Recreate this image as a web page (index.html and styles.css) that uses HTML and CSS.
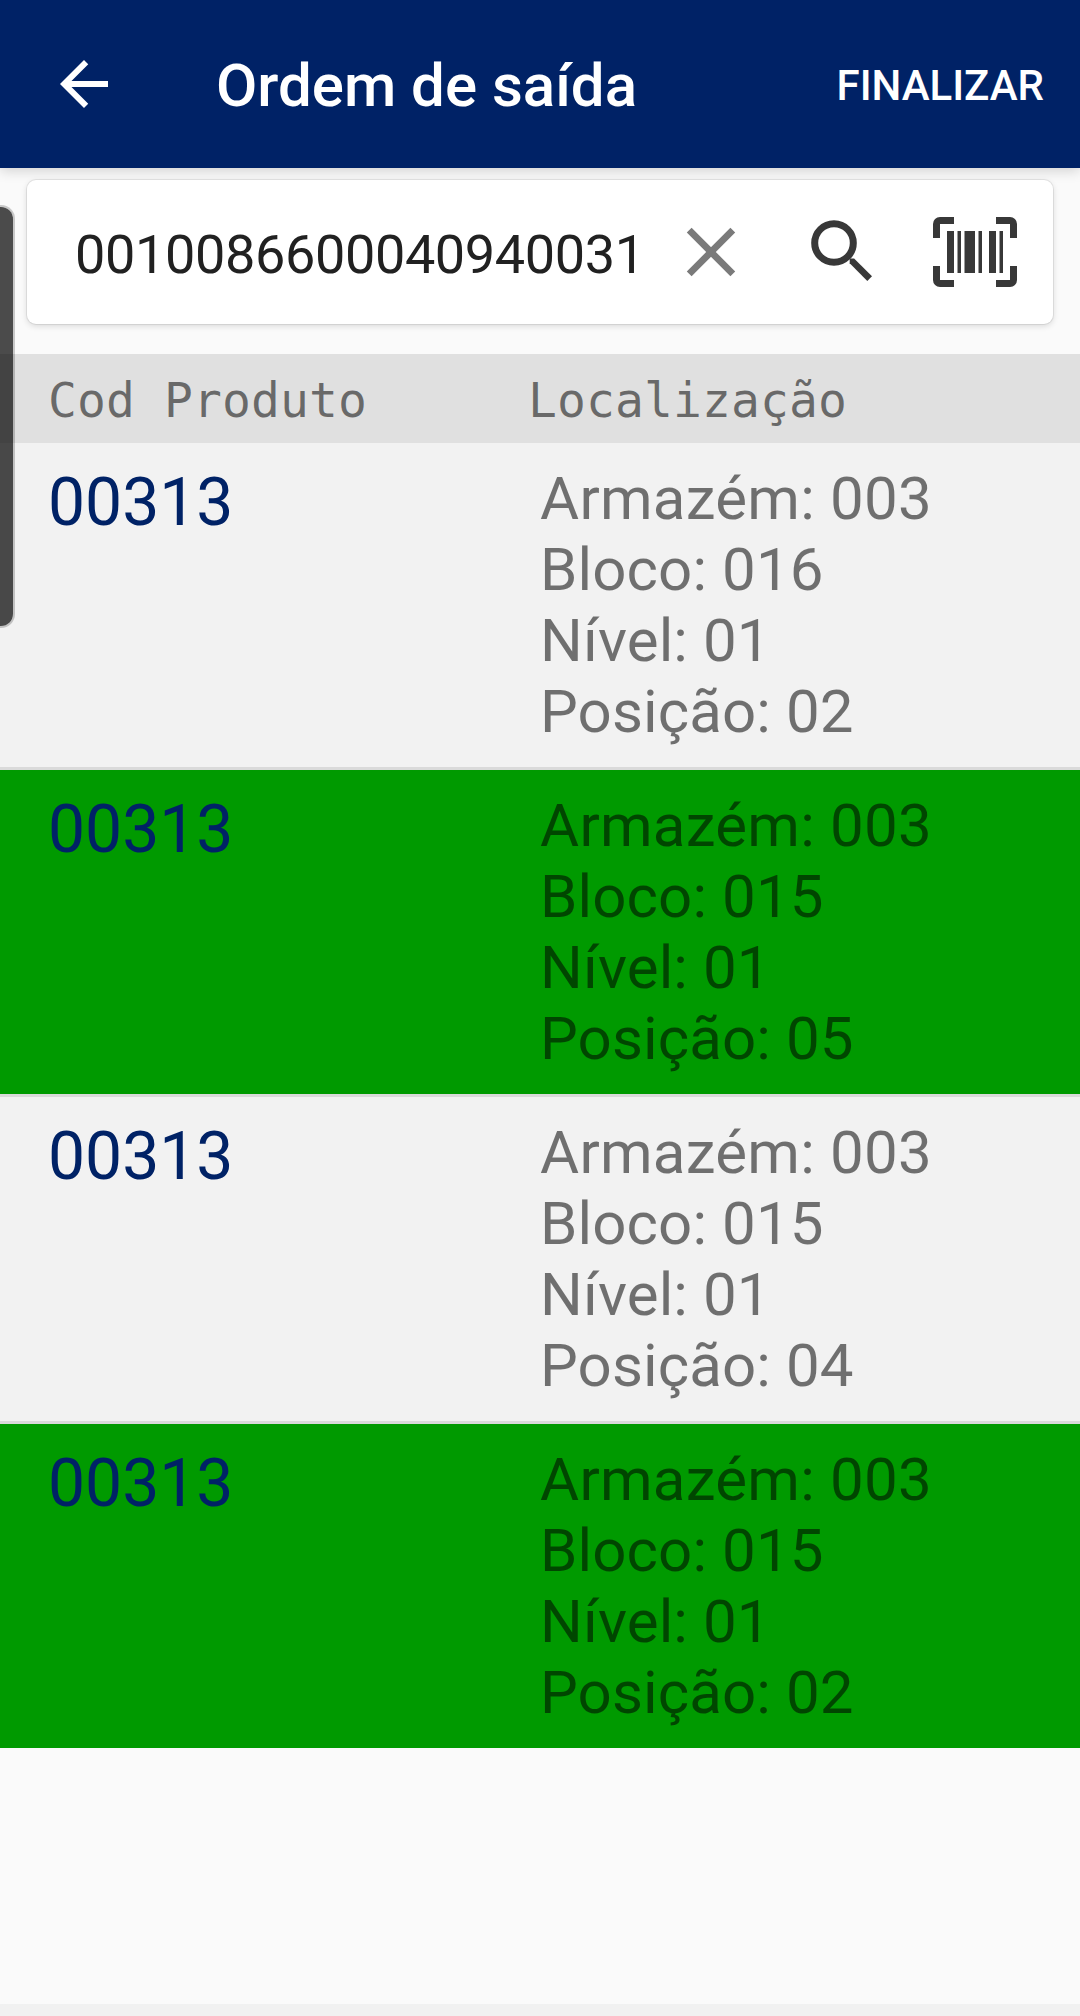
FILE: index.html
```html
<!DOCTYPE html>
<html lang="pt-BR">
<head>
<meta charset="utf-8">
<title>Ordem de saída</title>
<link rel="stylesheet" href="styles.css">
</head>
<body>
<header class="toolbar">
  <svg class="back" viewBox="0 0 24 24"><path d="M20 11H7.83l5.59-5.59L12 4l-8 8 8 8 1.41-1.41L7.83 13H20z"/></svg>
  <h1 class="title">Ordem de saída</h1>
  <span class="action">FINALIZAR</span>
</header>
<main class="content">
  <section class="search">
    <span class="query">0010086600040940031</span>
    <svg class="clear" viewBox="0 0 50 50"><path d="M3.2 3.2l43.6 43.6M46.8 3.2L3.2 46.8"/></svg>
    <svg class="find" viewBox="0 0 62 62"><circle cx="23" cy="23" r="19.3"/><path d="M38.7 38.4h4.4L61 56.2l-4.7 4.7L38.7 43.2z"/></svg>
    <svg class="scan" viewBox="0 0 24 20"><path d="M6 0H2a2 2 0 0 0-2 2v4h2V2h4zM18 0h4a2 2 0 0 1 2 2v4h-2V2h-4zM6 20H2a2 2 0 0 1-2-2v-4h2v4h4zM18 20h4a2 2 0 0 0 2-2v-4h-2v4h-4zM4 4h2v12H4zM7 4h1v12H7zM9 4h3v12H9zM13 4h1v12h-1zM16 4h2v12h-2zM19 4h1v12h-1z"/></svg>
  </section>
  <div class="table-head"><span>Cod Produto</span><span>Localização</span></div>
  <ul class="rows">
    <li class="row"><span class="code">00313</span><div class="place"><p>Armazém: 003</p><p>Bloco: 016</p><p>Nível: 01</p><p>Posição: 02</p></div></li>
    <li class="row done"><span class="code">00313</span><div class="place"><p>Armazém: 003</p><p>Bloco: 015</p><p>Nível: 01</p><p>Posição: 05</p></div></li>
    <li class="row"><span class="code">00313</span><div class="place"><p>Armazém: 003</p><p>Bloco: 015</p><p>Nível: 01</p><p>Posição: 04</p></div></li>
    <li class="row done"><span class="code">00313</span><div class="place"><p>Armazém: 003</p><p>Bloco: 015</p><p>Nível: 01</p><p>Posição: 02</p></div></li>
  </ul>
</main>
<footer class="bottom"></footer>
<div class="edge-handle"></div>
</body>
</html>
```
FILE: styles.css
```css
* { box-sizing: border-box; margin: 0; padding: 0; }

body {
  position: relative;
  display: flex;
  flex-direction: column;
  height: 2016px;
  overflow: hidden;
  background: #fafafa;
  font-family: Roboto, "Liberation Sans", sans-serif;
}

.toolbar {
  display: flex;
  align-items: center;
  flex: none;
  height: 168px;
  padding: 0 36px 0 48px;
  background: #002266;
  color: #fff;
  box-shadow: 0 3px 12px rgba(0, 0, 0, .16);
}
.back { width: 72px; height: 72px; fill: #fff; }
.title {
  flex: 1;
  margin-left: 96px;
  padding-top: 4px;
  font-size: 60px;
  font-weight: 500;
  line-height: 70px;
}
.action { font-size: 42px; font-weight: 500; line-height: 50px; padding-top: 3px; }

.content { flex: 1; padding-top: 12px; }

.search {
  display: flex;
  align-items: center;
  height: 144px;
  margin: 0 27px 30px;
  padding: 0 36px 0 48px;
  border-radius: 9px;
  background: #fff;
  box-shadow: 0 0 0 1px rgba(0, 0, 0, .07), 0 2px 6px rgba(0, 0, 0, .14);
}
.query {
  flex: 1;
  padding-top: 6px;
  color: #212121;
  font-size: 54px;
  line-height: 64px;
  letter-spacing: -.36px;
}
.clear { width: 50px; height: 50px; margin-right: 75px; fill: none; stroke: #7a7a7a; stroke-width: 6.8; }
.find { width: 62px; height: 62px; margin: 0 60px 2px 0; fill: #383838; }
.find circle { fill: none; stroke: #383838; stroke-width: 7; }
.scan { width: 84px; height: 70px; fill: #383838; }

.table-head {
  display: grid;
  grid-template-columns: 480px 1fr;
  align-items: center;
  height: 89px;
  padding: 2px 0 0 48px;
  background: #e0e0e0;
  color: rgba(0, 0, 0, .54);
  font: 48px/60px "DejaVu Sans Mono", monospace;
  letter-spacing: .1px;
}

.rows { list-style: none; }
.row {
  display: grid;
  grid-template-columns: 492px 1fr;
  height: 327px;
  padding: 20px 0 0 48px;
  border-bottom: 3px solid #dadada;
  background: #f2f2f2;
}
.row.done { background: #009a00; }
.row:last-child { height: 324px; border-bottom: 0; }
.code { padding-top: 1px; color: #002266; font-size: 66px; line-height: 78px; }
.place { color: rgba(0, 0, 0, .54); font-size: 60px; line-height: 71px; letter-spacing: .12px; }
.place p:first-child { letter-spacing: .25px; }

.bottom { flex: none; height: 12px; background: #f1f1f1; }

.edge-handle {
  position: absolute;
  top: 205px;
  left: -20px;
  width: 35px;
  height: 423px;
  border: 2px solid rgba(0, 0, 0, .2);
  border-radius: 14px;
  background: rgba(0, 0, 0, .7);
  background-clip: padding-box;
}
```
